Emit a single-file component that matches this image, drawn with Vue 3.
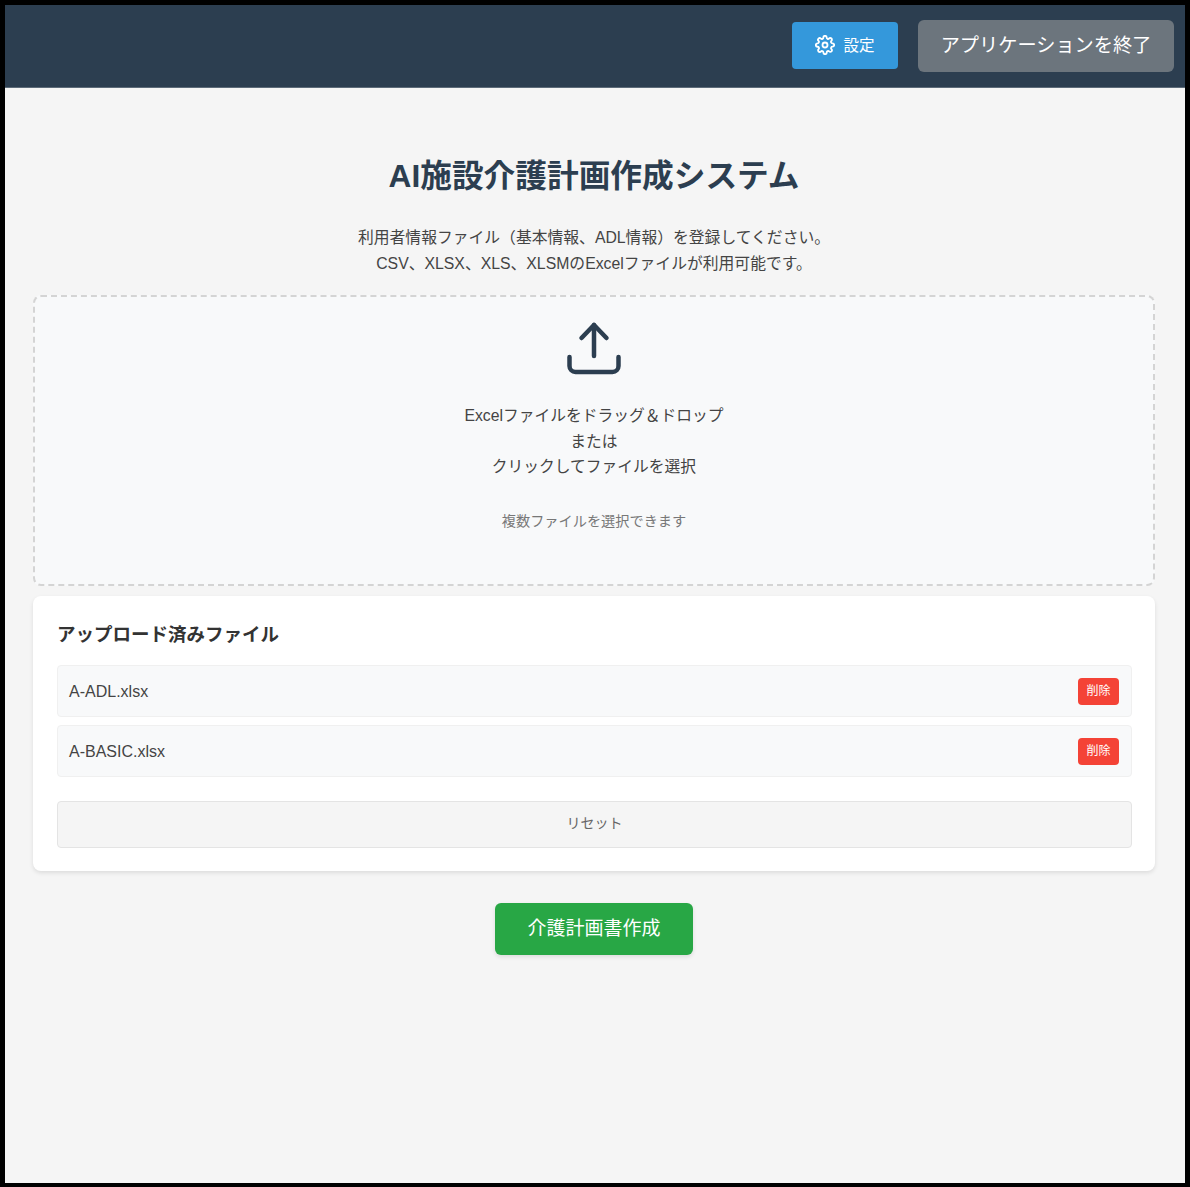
<script setup>
const files = ['A-ADL.xlsx', 'A-BASIC.xlsx']
</script>

<template>
  <div class="frame">
    <header class="top-bar">
      <button class="settings-btn">
        <svg class="gear" viewBox="0 0 24 24" fill="none" stroke="currentColor" stroke-width="2.2" stroke-linecap="round" stroke-linejoin="round">
          <circle cx="12" cy="12" r="3" />
          <path d="M19.4 15a1.65 1.65 0 0 0 .33 1.82l.06.06a2 2 0 1 1-2.83 2.83l-.06-.06a1.65 1.65 0 0 0-1.82-.33 1.65 1.65 0 0 0-1 1.51V21a2 2 0 1 1-4 0v-.09a1.65 1.65 0 0 0-1.08-1.51 1.65 1.65 0 0 0-1.82.33l-.06.06a2 2 0 1 1-2.83-2.83l.06-.06a1.65 1.65 0 0 0 .33-1.82 1.65 1.65 0 0 0-1.51-1H3a2 2 0 1 1 0-4h.09a1.65 1.65 0 0 0 1.51-1.08 1.65 1.65 0 0 0-.33-1.82l-.06-.06a2 2 0 1 1 2.83-2.83l.06.06a1.65 1.65 0 0 0 1.82.33h.08a1.65 1.65 0 0 0 1-1.51V3a2 2 0 1 1 4 0v.09a1.65 1.65 0 0 0 1 1.51 1.65 1.65 0 0 0 1.82-.33l.06-.06a2 2 0 1 1 2.83 2.83l-.06.06a1.65 1.65 0 0 0-.33 1.82v.08a1.65 1.65 0 0 0 1.51 1H21a2 2 0 1 1 0 4h-.09a1.65 1.65 0 0 0-1.51 1z" />
        </svg>
        <span class="settings-label">設定</span>
      </button>
      <button class="exit-btn">アプリケーションを終了</button>
    </header>

    <main class="content">
      <h1 class="title">AI施設介護計画作成システム</h1>
      <p class="intro">利用者情報ファイル（基本情報、ADL情報）を登録してください。<br />CSV、XLSX、XLS、XLSMのExcelファイルが利用可能です。</p>

      <section class="drop-zone">
        <svg class="upload-icon" viewBox="0 0 56 56" fill="none" stroke="#2c3e50" stroke-width="4.5" stroke-linecap="round" stroke-linejoin="round">
          <path d="M3.5 36v9a6 6 0 0 0 6 6h37a6 6 0 0 0 6-6v-9" />
          <path d="M28 35V4" />
          <path d="M15.5 17L28 4l12.5 13" />
        </svg>
        <p class="drop-text">Excelファイルをドラッグ＆ドロップ<br />または<br />クリックしてファイルを選択</p>
        <p class="drop-note">複数ファイルを選択できます</p>
      </section>

      <section class="file-card">
        <h2 class="file-heading">アップロード済みファイル</h2>
        <div v-for="file in files" :key="file" class="file-row">
          <span class="file-name">{{ file }}</span>
          <button class="delete-btn">削除</button>
        </div>
        <button class="reset-btn">リセット</button>
      </section>

      <button class="create-btn">介護計画書作成</button>
    </main>
  </div>
</template>

<style>
html, body {
  margin: 0;
  background: #000;
}
</style>

<style scoped>
.frame {
  box-sizing: border-box;
  width: 1190px;
  height: 1187px;
  border: solid #000;
  border-width: 5px 5px 4px;
  background: #f5f5f5;
  font-family: "Liberation Sans", "Noto Sans CJK JP", sans-serif;
  color: #333;
  display: flex;
  flex-direction: column;
}

button {
  font-family: inherit;
  cursor: pointer;
}

.top-bar {
  height: 83px;
  flex: none;
  box-sizing: border-box;
  background: #2c3e50;
  border-bottom: 1px solid #5d6b79;
  display: flex;
  justify-content: flex-end;
  align-items: center;
  gap: 20px;
  padding: 0 11px 0 0;
}

.settings-btn {
  width: 106px;
  height: 47px;
  margin-bottom: 2px;
  display: flex;
  align-items: center;
  justify-content: center;
  gap: 8px;
  border: none;
  border-radius: 4px;
  background: #3498db;
  color: #fff;
  font-size: 15.5px;
  padding: 0;
}

.settings-label {
  padding-bottom: 3px;
}

.gear {
  width: 20px;
  height: 20px;
}

.exit-btn {
  width: 256px;
  height: 52px;
  border: none;
  border-radius: 6px;
  background: #6c757d;
  color: #fff;
  font-size: 19.2px;
  padding: 0 0 5px;
}

.content {
  display: flex;
  flex-direction: column;
  align-items: center;
  padding: 0 30px 0 28px;
}

.title {
  margin: 68px 0 0;
  font-size: 31.7px;
  line-height: 40px;
  font-weight: 700;
  color: #2c3e50;
}

.intro {
  margin: 29px 0 0;
  font-size: 15.8px;
  line-height: 25.5px;
  text-align: center;
  color: #444;
}

.drop-zone {
  box-sizing: border-box;
  width: 100%;
  height: 291px;
  margin-top: 19px;
  padding-top: 24px;
  border: 2px dashed #d4d4d4;
  border-radius: 8px;
  background: #f8f9fa;
  display: flex;
  flex-direction: column;
  align-items: center;
}

.upload-icon {
  width: 56px;
  height: 56px;
}

.drop-text {
  margin: 26px 0 0;
  font-size: 15.75px;
  line-height: 25.5px;
  text-align: center;
  color: #444;
}

.drop-note {
  margin: 31px 0 0;
  font-size: 14.2px;
  line-height: 20px;
  color: #777;
}

.file-card {
  box-sizing: border-box;
  width: 100%;
  height: 275px;
  margin-top: 10px;
  padding: 25px 23px 0 24px;
  border-radius: 8px;
  background: #fff;
  box-shadow: 0 2px 4px rgba(0, 0, 0, 0.1);
}

.file-heading {
  margin: 0 0 17px;
  font-size: 18.5px;
  line-height: 27px;
  font-weight: 700;
  color: #333;
}

.file-row {
  box-sizing: border-box;
  height: 52px;
  margin-bottom: 8px;
  padding: 0 12px 0 11px;
  display: flex;
  align-items: center;
  justify-content: space-between;
  border: 1px solid #f0f0f0;
  border-radius: 4px;
  background: #f8f9fa;
  font-size: 16px;
  color: #444;
}

.file-name {
  padding-top: 2px;
}

.delete-btn {
  width: 41px;
  height: 27px;
  padding: 0 0 4px;
  border: none;
  border-radius: 4px;
  background: #f44336;
  color: #fff;
  font-size: 12px;
}

.reset-btn {
  display: block;
  width: 100%;
  height: 47px;
  margin-top: 24px;
  padding: 0 0 6px;
  border: 1px solid #e4e4e4;
  border-radius: 4px;
  background: #f5f5f5;
  color: #666;
  font-size: 14px;
}

.create-btn {
  width: 198px;
  height: 52px;
  margin-top: 32px;
  padding: 0 0 6px;
  border: none;
  border-radius: 6px;
  background: #28a745;
  color: #fff;
  font-size: 19px;
  box-shadow: 0 2px 4px rgba(0, 0, 0, 0.1);
}
</style>
